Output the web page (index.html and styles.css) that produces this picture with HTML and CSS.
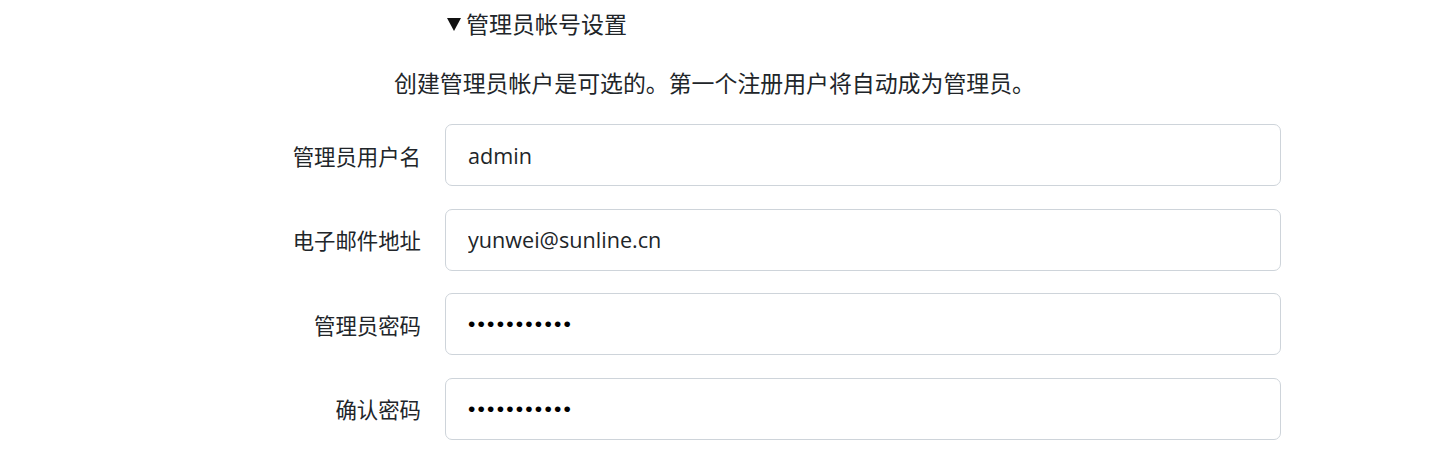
FILE: index.html
```html
<!DOCTYPE html>
<html lang="zh-CN">
<head>
<meta charset="utf-8">
<link rel="stylesheet" href="styles.css">
</head>
<body>
<div class="page">
  <details class="section" open>
    <summary class="summary">管理员帐号设置</summary>
    <p class="desc">创建管理员帐户是可选的。第一个注册用户将自动成为管理员。</p>
    <div class="form">
      <label class="label" for="u">管理员用户名</label>
      <input class="input" id="u" type="text" value="admin">
      <label class="label" for="e">电子邮件地址</label>
      <input class="input" id="e" type="text" value="yunwei@sunline.cn">
      <label class="label" for="p">管理员密码</label>
      <input class="input pw" id="p" type="password" value="12345678901">
      <label class="label" for="c">确认密码</label>
      <input class="input pw" id="c" type="password" value="12345678901">
    </div>
  </details>
</div>
</body>
</html>
```
FILE: styles.css
```css
html, body {
  margin: 0;
  padding: 0;
  background: #ffffff;
}
body {
  font-family: "Open Sans", "Noto Sans CJK SC", sans-serif;
  color: #212529;
}
.page {
  width: 1140px;
  margin-left: 141px;
}
.section {
  margin: 0;
}
.summary {
  list-style: none;
  margin-left: 306px;
  font-size: 23px;
  line-height: 32px;
  padding-top: 8px;
  cursor: pointer;
  display: flex;
  align-items: center;
}
.summary::-webkit-details-marker {
  display: none;
}
.summary::before {
  content: "";
  display: inline-block;
  width: 0;
  height: 0;
  border-left: 7.5px solid transparent;
  border-right: 7.5px solid transparent;
  border-top: 13px solid #111;
  margin-right: 5px;
  margin-top: 1px;
}
.desc {
  margin: 26px 0 0 0;
  padding-left: 7px;
  text-align: center;
  font-size: 22.9px;
  line-height: 32px;
  font-family: "Noto Sans CJK SC", sans-serif;
}
.form {
  display: grid;
  grid-template-columns: 280px 836px;
  column-gap: 24px;
  row-gap: 22.5px;
  margin-top: 26px;
  align-items: center;
}
.label {
  text-align: right;
  font-size: 21.4px;
  font-family: "Noto Sans CJK SC", sans-serif;
  color: #212529;
}
.input {
  box-sizing: border-box;
  height: 62px;
  width: 836px;
  border: 1px solid #ced4da;
  border-radius: 7px;
  padding: 0 22px;
  font-family: "Open Sans", sans-serif;
  font-size: 21.6px;
  color: #212529;
  background: #fff;
  outline: none;
}
.pw {
  font-family: "Liberation Sans", sans-serif;
  font-size: 21px;
  letter-spacing: 2.2px;
  color: #000;
}
```
